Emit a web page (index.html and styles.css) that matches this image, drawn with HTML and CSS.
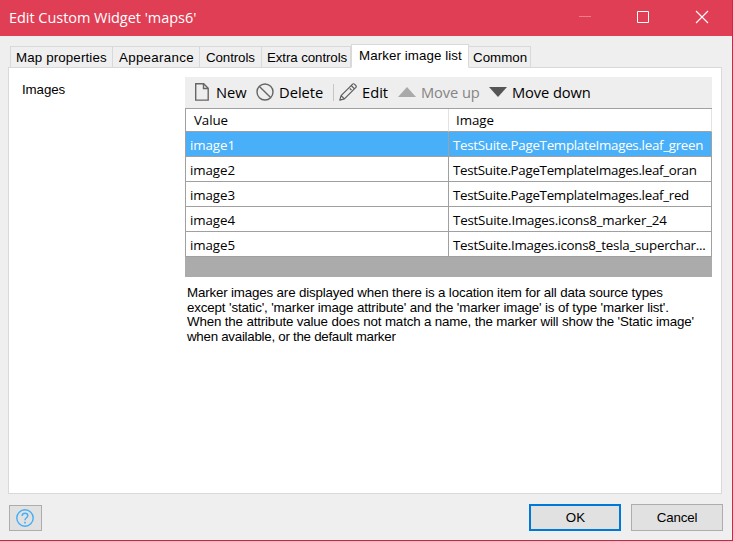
FILE: index.html
```html
<!DOCTYPE html>
<html lang="en">
<head>
<meta charset="utf-8">
<title>Edit Custom Widget 'maps6'</title>
<link rel="stylesheet" href="styles.css">
</head>
<body>
<div class="window">
  <header class="titlebar">
    <span class="title">Edit Custom Widget 'maps6'</span>
    <svg class="controls" width="130" height="14" viewBox="0 0 130 14" fill="none">
      <path d="M0 6.5h12" stroke="#eb7d8e"/>
      <path d="M58.5 1.5h11v11h-11z" stroke="#fff"/>
      <path d="M117 1l12 12M129 1l-12 12" stroke="#fff" stroke-width="1.1"/>
    </svg>
  </header>
  <nav class="tabs">
    <div class="tab t1">Map properties</div>
    <div class="tab t2">Appearance</div>
    <div class="tab t3">Controls</div>
    <div class="tab t4">Extra controls</div>
    <div class="tab t5 active">Marker image list</div>
    <div class="tab t6">Common</div>
  </nav>
  <main class="pane">
    <div class="label">Images</div>
    <section class="content">
      <div class="toolbar">
        <div class="tool new"><svg width="16" height="18" viewBox="0 0 16 18" fill="none" stroke="#666" stroke-width="1.4"><path d="M1.7.8h8l4.5 4.5v11.8H1.7zM9.5 1v4.5H14"/></svg><span>New</span></div>
        <div class="tool delete"><svg width="18" height="18" viewBox="0 0 18 18" fill="none" stroke="#666" stroke-width="1.4"><circle cx="9" cy="9" r="8"/><path d="M3.4 3.4l11.2 11.2"/></svg><span>Delete</span></div>
        <i class="divider"></i>
        <div class="tool edit"><svg width="18" height="18" viewBox="0 0 18 18" fill="none" stroke="#5c5c5c" stroke-width="1.2" stroke-linejoin="round"><path d="M.8 17.2l1.3-4.6L13.6 1.1q.9-.7 1.8 0l1.5 1.5q.7.9 0 1.8L5.4 15.9zM2.1 12.6l3.3 3.3M12.2 2.5l3.3 3.3M10.8 5.5l1.7 1.7"/></svg><span>Edit</span></div>
        <div class="tool up"><svg width="18" height="12" viewBox="0 0 18 12"><path d="M0 11L9 1l9 10z" fill="#a9a9a9"/></svg><span>Move up</span></div>
        <div class="tool down"><svg width="18" height="12" viewBox="0 0 18 12"><path d="M0 1h18L9 11z" fill="#555"/></svg><span>Move down</span></div>
      </div>
      <div class="grid">
        <div class="row head"><div class="cell"><span>Value</span></div><div class="cell"><span>Image</span></div></div>
        <div class="row selected"><div class="cell">image1</div><div class="cell"><span class="r1">TestSuite.PageTemplateImages.leaf_green</span></div></div>
        <div class="row"><div class="cell">image2</div><div class="cell"><span class="r2">TestSuite.PageTemplateImages.leaf_oran</span></div></div>
        <div class="row"><div class="cell">image3</div><div class="cell"><span class="r3">TestSuite.PageTemplateImages.leaf_red</span></div></div>
        <div class="row"><div class="cell">image4</div><div class="cell"><span class="r4">TestSuite.Images.icons8_marker_24</span></div></div>
        <div class="row"><div class="cell">image5</div><div class="cell"><span class="r5">TestSuite.Images.icons8_tesla_superchar...</span></div></div>
      </div>
      <p class="note"><span class="n1">Marker images are displayed when there is a location item for all data source types</span><span class="n2">except 'static', 'marker image attribute' and the 'marker image' is of type 'marker list'.</span><span class="n3">When the attribute value does not match a name, the marker will show the 'Static image'</span><span class="n4">when available, or the default marker</span></p>
    </section>
  </main>
  <footer class="footer">
    <button class="help" aria-label="Help"><svg width="18" height="18" viewBox="0 0 18 18" fill="none" stroke="#45aef5" stroke-width="1.4"><circle cx="9" cy="9" r="8.2"/><path d="M6.2 7V6.5Q6.2 4.2 9 4.2t2.8 2.4Q11.8 8 10.2 9 9 9.8 9 11.3"/><path d="M8.2 13.7h1.6" stroke-width="1.8"/></svg></button>
    <button class="btn ok">OK</button>
    <button class="btn cancel">Cancel</button>
  </footer>
</div>
</body>
</html>
```
FILE: styles.css
```css
* { box-sizing: border-box; }
body { margin: 0; background: #d5c5c8; }
.window {
  width: 733px; height: 541px;
  border-right: 1px solid #dc1f3c; border-bottom: 1px solid #dc1f3c;
  background: #efefef; color: #000;
  font: 13.33px/16px "Liberation Sans", Arial, sans-serif;
  display: flex; flex-direction: column; overflow: hidden;
  white-space: nowrap;
}
.titlebar {
  height: 36px; flex: none; margin-right: -1px; padding: 0 23px 2px 9px;
  background: #df3e55; border-right: 1px solid #dc1f3c; color: #fff;
  display: flex; align-items: center; justify-content: space-between;
  font: 14.5px/20px "Open Sans", "Noto Sans", sans-serif;
}
.title { letter-spacing: -.04px; padding-top: 1px; }
.tabs { height: 32px; flex: none; padding-left: 10px; display: flex; align-items: flex-end; margin-bottom: -1px; position: relative; }
.tab { height: 22px; border: 1px solid #d9d9d9; border-left: 0; padding: 3px 0 0 5px; background: #efefef; }
.t1 { width: 103px; border-left: 1px solid #d9d9d9; letter-spacing: .13px; }
.t2 { width: 87px; padding-left: 6px; letter-spacing: .3px; }
.t3 { width: 62px; padding-left: 6px; letter-spacing: -.1px; }
.t4 { width: 89px; padding-left: 5px; letter-spacing: -.1px; }
.t5 { width: 118px; padding-left: 7px; letter-spacing: .08px; }
.t6 { width: 62px; padding-left: 4px; }
.tab.active { height: 24px; background: #fff; border-left: 1px solid #d9d9d9; border-bottom-color: #fff; }
.pane {
  width: 714px; height: 427px; flex: none; margin-left: 8px;
  border: 1px solid #d9d9d9; background: #fff;
  display: flex; padding: 9px 9px 0 13px;
}
.label { width: 163px; padding-top: 5px; letter-spacing: -.1px; }
.content { width: 527px; }
.toolbar { height: 31px; background: #eee; display: flex; align-items: center; padding-left: 9px; font: 14.7px/20px "Open Sans", "Noto Sans", sans-serif; }
.tool { display: flex; align-items: center; }
.tool svg { flex: none; }
.tool span { margin-top: -2px; }
.new { width: 62px; gap: 6px; }
.new svg, .delete svg, .edit svg { margin-top: -1px; }
.delete { width: 77px; gap: 5px; }
.divider { width: 1px; height: 17px; background: #c6c6c6; margin-right: 5px; }
.edit { width: 59px; gap: 5px; }
.up { width: 91px; gap: 5px; color: #858585; }
.up svg, .down svg { margin-top: -2px; }
.up span { letter-spacing: -.1px; }
.down { gap: 5px; letter-spacing: -.1px; }
.grid { height: 169px; background: #ababab; border-top: 1px solid #a0a0a0; font: 13.33px/20px "Open Sans", "Noto Sans", sans-serif; }
.row { display: grid; grid-template-columns: 263px 263px; height: 25px; border-left: 1px solid #a0a0a0; background: #fff; }
.cell { border-right: 1px solid #a0a0a0; border-bottom: 1px solid #a0a0a0; padding: 3px 0 0 4px; letter-spacing: -.08px; }
.head { height: 23px; }
.head .cell { border-right-color: #e2e2e2; padding: 1px 0 0 8px; }
.head .cell + .cell { padding-left: 7px; }
.selected { background: #48aff8; color: #fff; }
.r1, .r2, .r3 { letter-spacing: -.29px; }
.r4 { letter-spacing: -.21px; }
.r5 { letter-spacing: -.25px; }
.note { margin: 9px 0 0 2px; line-height: 14.6px; }
.note span { display: block; }
.n1 { letter-spacing: -.16px; }
.n2 { letter-spacing: -.14px; }
.n3 { letter-spacing: -.15px; }
.n4 { letter-spacing: -.27px; }
.footer { height: 47px; flex: none; display: flex; align-items: flex-start; padding: 10px 9px 0 9px; }
button { margin: 0; padding: 0; border: 1px solid #adadad; background: #e1e1e1; font: inherit; color: inherit; }
.help { width: 33px; height: 26px; margin: 1px auto 0 0; padding-right: 1px; display: flex; align-items: center; justify-content: center; }
.btn { width: 92px; height: 27px; }
.ok { border: 2px solid #0078d7; margin-right: 10px; padding-left: 1px; }
.cancel { letter-spacing: -.15px; }
```
